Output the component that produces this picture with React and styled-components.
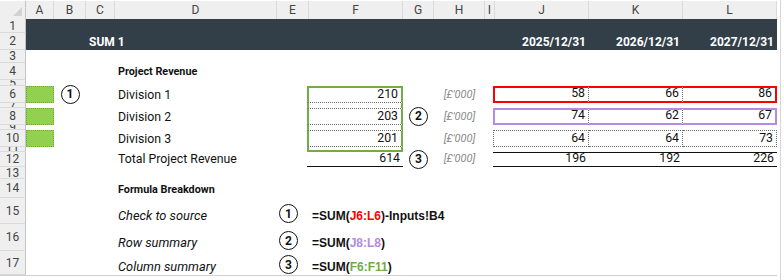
import React from "react";
import styled, { createGlobalStyle } from "styled-components";

const GlobalStyle = createGlobalStyle`
  html, body {
    margin: 0;
    padding: 0;
    background: #fff;
  }
  body {
    font-family: Roboto, "Liberation Sans", sans-serif;
  }
`;

const COLUMNS = [
  ["A", 28], ["B", 32], ["C", 29], ["D", 162], ["E", 32], ["F", 94],
  ["G", 31], ["H", 51], ["I", 10], ["J", 94], ["K", 94], ["L", 94],
];

const ROW_HEIGHTS = [14, 17, 13, 17, 6, 17, 5, 17, 5, 17, 5, 15, 12, 19, 26, 27, 24];

const GREEN = "2px solid #70ad47";
const RED = "2px solid #ff0000";
const PURPLE = "2px solid #b48be0";
const DOT = "1px dotted #6b6b6b";
const LINE = "1px solid #111";

const Frame = styled.div`
  padding-top: 1px;
  width: 780px;
  height: 279px;
  border-right: 1px solid #d6d6d6;
  overflow: hidden;
`;

const Sheet = styled.div`
  display: grid;
  grid-template-columns: 26px ${COLUMNS.map(([, w]) => `${w}px`).join(" ")};
  grid-template-rows: 18px ${ROW_HEIGHTS.map((h) => `${h}px`).join(" ")};
  width: max-content;
  border-bottom: 1px solid #d0d0d0;
`;

const Corner = styled.div`
  grid-column: 1;
  grid-row: 1;
  background: #efefef;
  border-right: 1px solid #c4c4c4;
  position: relative;

  &::after {
    content: "";
    position: absolute;
    right: 3px;
    bottom: 3px;
    border-style: solid;
    border-width: 0 0 9px 9px;
    border-color: transparent transparent #d2d2d2 transparent;
  }
`;

const ColHead = styled.div`
  grid-column: ${(p) => p.$col};
  grid-row: 1;
  display: flex;
  align-items: center;
  justify-content: center;
  background: #efefef;
  border-right: 1px solid #dadada;
  box-sizing: border-box;
  font-size: 12px;
  color: #444;
`;

const RowHead = styled.div`
  grid-column: 1;
  grid-row: ${(p) => p.$row};
  display: flex;
  align-items: center;
  justify-content: center;
  background: #efefef;
  border-right: 1px solid #c4c4c4;
  border-bottom: 1px solid #dadada;
  box-sizing: border-box;
  overflow: hidden;
  font-size: 12px;
  line-height: 14px;
  color: #444;
`;

// dark title band behind rows 1-2
const Band = styled.div`
  grid-column: 2 / -1;
  grid-row: 2 / 4;
  background: #333f48;
`;

const Cell = styled.div`
  grid-column: ${(p) => p.$col};
  grid-row: ${(p) => p.$row};
  display: flex;
  align-items: ${(p) => (p.$middle ? "center" : "flex-end")};
  justify-content: ${(p) =>
    p.$align === "right" ? "flex-end" : p.$align === "center" ? "center" : "flex-start"};
  padding: ${(p) => (p.$tight ? "0 0 1px 2px" : "0 3px 1px")};
  margin-left: ${(p) => (p.$shift ? "-2px" : "0")};
  box-sizing: border-box;
  min-width: 0;
  border-top: ${(p) => p.$bt || "none"};
  border-bottom: ${(p) => p.$bb || "none"};
  border-left: ${(p) => p.$bl || "none"};
  border-right: ${(p) => p.$br || "none"};
  white-space: nowrap;
  font-size: 12.3px;
  line-height: 14px;
  color: #111;
`;

const Title = styled.span`
  font-size: 12px;
  font-weight: 700;
  color: #fff;
`;

const Heading = styled.span`
  font-size: 10.8px;
  font-weight: 700;
  color: #111;
`;

const Unit = styled.span`
  font-size: 11px;
  font-style: italic;
  color: #8c8c8c;
`;

const Note = styled.span`
  font-size: 12.8px;
  font-style: italic;
`;

const Formula = styled.span`
  font-family: "Liberation Sans", Arial, sans-serif;
  font-size: 12px;
  font-weight: 700;
  color: #111;
`;

const Ref = styled.span`
  color: ${(p) => p.$color};
`;

const Marker = styled.span`
  display: inline-flex;
  align-items: center;
  justify-content: center;
  flex: none;
  width: 19px;
  height: 19px;
  box-sizing: border-box;
  border: 1.5px solid #111;
  border-radius: 50%;
  background: #fff;
  font-size: 12px;
  font-weight: 700;
  line-height: 1;
  color: #111;
`;

const Check = styled.div`
  grid-column: 2;
  grid-row: ${(p) => p.$row};
  background: #92d050;
  border: 1px dotted #6fae2e;
  box-sizing: border-box;
`;

const colIndex = (letter) => COLUMNS.findIndex(([l]) => l === letter) + 2;

// cell contents and borders, keyed by address
const cells = {
  C2: { v: <Title>SUM 1</Title> },
  J2: { v: <Title>2025/12/31</Title>, align: "right" },
  K2: { v: <Title>2026/12/31</Title>, align: "right" },
  L2: { v: <Title>2027/12/31</Title>, align: "right" },

  D4: { v: <Heading>Project Revenue</Heading> },

  B6: { v: <Marker>1</Marker>, align: "center", middle: true },
  D6: { v: "Division 1" },
  D8: { v: "Division 2" },
  D10: { v: "Division 3" },
  D12: { v: "Total Project Revenue" },

  F6: { v: "210", align: "right", bt: GREEN, bl: GREEN, br: GREEN, bb: DOT, shift: true },
  F7: { bl: GREEN, br: GREEN, shift: true },
  F8: { v: "203", align: "right", bl: GREEN, br: GREEN, bt: DOT, bb: DOT, shift: true },
  F9: { bl: GREEN, br: GREEN, shift: true },
  F10: { v: "201", align: "right", bl: GREEN, br: GREEN, bt: DOT, bb: DOT, shift: true },
  F11: { bl: GREEN, br: GREEN, bb: GREEN, shift: true },
  F12: { v: "614", align: "right", bb: LINE, shift: true },

  G8: { v: <Marker>2</Marker>, align: "center", middle: true },
  G12: { v: <Marker>3</Marker>, align: "center", middle: true },

  H6: { v: <Unit>[£'000]</Unit>, align: "center" },
  H8: { v: <Unit>[£'000]</Unit>, align: "center" },
  H10: { v: <Unit>[£'000]</Unit>, align: "center" },
  H12: { v: <Unit>[£'000]</Unit>, align: "center" },

  D14: { v: <Heading>Formula Breakdown</Heading> },
  D15: { v: <Note>Check to source</Note> },
  D16: { v: <Note>Row summary</Note> },
  D17: { v: <Note>Column summary</Note> },
  E15: { v: <Marker>1</Marker>, tight: true },
  E16: { v: <Marker>2</Marker>, tight: true },
  E17: { v: <Marker>3</Marker>, tight: true },
  F15: {
    v: (
      <Formula>
        =SUM(<Ref $color="#ff0000">J6:L6</Ref>)-Inputs!B4
      </Formula>
    ),
  },
  F16: {
    v: (
      <Formula>
        =SUM(<Ref $color="#b48be0">J8:L8</Ref>)
      </Formula>
    ),
  },
  F17: {
    v: (
      <Formula>
        =SUM(<Ref $color="#70ad47">F6:F11</Ref>)
      </Formula>
    ),
  },
};

// a framed row across J:L with dotted dividers inside
const framedRow = (row, values, edge) => {
  ["J", "K", "L"].forEach((col, i) => {
    cells[`${col}${row}`] = {
      v: String(values[i]),
      align: "right",
      bt: edge,
      bb: edge,
      bl: i === 0 ? edge : "none",
      br: i === 2 ? edge : DOT,
      shift: i === 0,
    };
  });
};

framedRow(6, [58, 66, 86], RED);
framedRow(8, [74, 62, 67], PURPLE);
framedRow(10, [64, 64, 73], DOT);
["J", "K", "L"].forEach((col, i) => {
  cells[`${col}12`] = {
    v: String([196, 192, 226][i]),
    align: "right",
    bt: LINE,
    bb: LINE,
    shift: i === 0,
  };
});

const App = () => {
  const rows = ROW_HEIGHTS.map((_, i) => i + 1);

  return (
    <>
      <GlobalStyle />
      <Frame>
        <Sheet>
          <Corner />
          {COLUMNS.map(([letter], i) => (
            <ColHead key={letter} $col={i + 2}>
              {letter}
            </ColHead>
          ))}
          {rows.map((r) => (
            <RowHead key={r} $row={r + 1}>
              {r}
            </RowHead>
          ))}
          <Band />
          {[6, 8, 10].map((r) => (
            <Check key={r} $row={r + 1} />
          ))}
          {rows.flatMap((r) =>
            COLUMNS.map(([letter]) => {
              const c = cells[`${letter}${r}`];
              if (!c) return null;
              return (
                <Cell
                  key={`${letter}${r}`}
                  $col={colIndex(letter)}
                  $row={r + 1}
                  $align={c.align}
                  $middle={c.middle}
                  $tight={c.tight}
                  $shift={c.shift}
                  $bt={c.bt}
                  $bb={c.bb}
                  $bl={c.bl}
                  $br={c.br}
                >
                  {c.v}
                </Cell>
              );
            })
          )}
        </Sheet>
      </Frame>
    </>
  );
};

export default App;
